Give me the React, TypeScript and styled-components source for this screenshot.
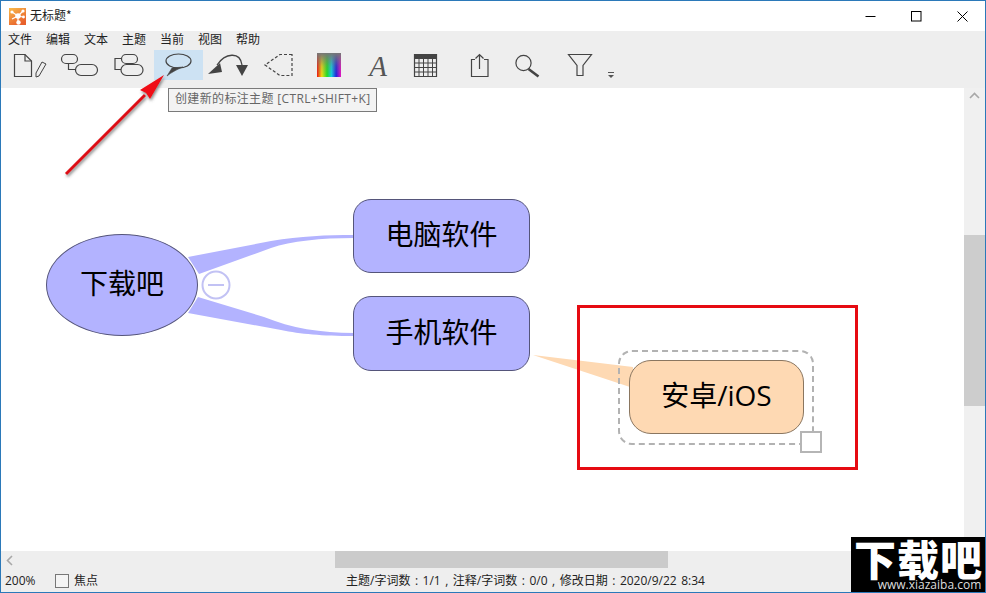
import React from "react";
import styled, { createGlobalStyle } from "styled-components";

const Global = createGlobalStyle`
  html, body { margin: 0; padding: 0; background: #fff; }
  body { font-family: "Noto Sans CJK SC", "Noto Sans", sans-serif; overflow: hidden; }
`;

const Frame = styled.div`
  position: relative;
  width: 986px;
  height: 593px;
  box-sizing: border-box;
  border: 1px solid #2b79b9;
  display: flex;
  flex-direction: column;
  overflow: hidden;
  background: #fff;
`;
const TitleBar = styled.div`
  height: 30px;
  display: flex;
  align-items: center;
  padding-left: 8px;
  flex: none;
`;
const TitleText = styled.span`
  font-size: 12px;
  line-height: 16px;
  color: #222;
  margin-left: 4px;
  margin-bottom: 3px;
`;
const WinControls = styled.div`
  margin-left: auto;
  display: flex;
`;
const WinButton = styled.div`
  width: 46px;
  height: 30px;
  display: flex;
  align-items: center;
  justify-content: center;
`;
const MenuBar = styled.div`
  height: 19px;
  box-sizing: border-box;
  flex: none;
  background: #eeeeee;
  display: flex;
  align-items: center;
  gap: 14px;
  padding: 0 0 3px 7px;
`;
const MenuItem = styled.span`
  font-size: 12px;
  line-height: 16px;
  color: #222;
`;
const Toolbar = styled.div`
  height: 38px;
  flex: none;
  background: #eeeeee;
  display: flex;
  align-items: flex-start;
  padding-left: 4px;
`;
const ToolButton = styled.div<{ $w: number; $gap?: number; $active?: boolean }>`
  width: ${(p) => p.$w}px;
  height: 30px;
  margin-left: ${(p) => p.$gap ?? 0}px;
  flex: none;
  background: ${(p) => (p.$active ? "#cde2f3" : "transparent")};
  svg { display: block; }
`;
const Main = styled.div`
  flex: 1;
  display: flex;
  min-height: 0;
`;
const Canvas = styled.div`
  position: relative;
  flex: 1;
  background: #fff;
`;
const VScroll = styled.div`
  width: 21px;
  flex: none;
  background: #f0f0f0;
  display: flex;
  flex-direction: column;
  align-items: center;
`;
const ScrollArrowBox = styled.div`
  height: 147px;
  width: 100%;
  display: flex;
  justify-content: center;
  padding-top: 4px;
  box-sizing: border-box;
`;
const VThumb = styled.div`
  width: 100%;
  height: 171px;
  background: #cdcdcd;
`;
const HScroll = styled.div`
  height: 19px;
  flex: none;
  background: #eeeeee;
  display: flex;
  align-items: flex-start;
  padding-left: 5px;
  svg { margin-top: 4px; }
`;
const HThumb = styled.div`
  width: 333px;
  height: 17px;
  margin-left: 322px;
  background: #cbcbcb;
`;
const StatusBar = styled.div`
  height: 22px;
  box-sizing: border-box;
  flex: none;
  background: #eeeeee;
  display: flex;
  align-items: center;
  font-size: 12px;
  line-height: 16px;
  color: #222;
  padding: 0 0 1px 4px;
  font-family: "Open Sans", "Noto Sans CJK SC", sans-serif;
`;
const Zoom = styled.span`
  width: 50px;
  flex: none;
`;
const Check = styled.span`
  width: 12px;
  height: 12px;
  border: 1px solid #777;
  background: #f4f4f4;
  flex: none;
  margin-right: 5px;
`;
const FocusLabel = styled.span`
  width: 272px;
  flex: none;
`;
const Stats = styled.span`
  white-space: pre;
  word-spacing: 1.4px;
`;

const Tip = styled.div`
  position: absolute;
  left: 167px;
  top: 0;
  width: 209px;
  height: 24px;
  box-sizing: border-box;
  border: 1px solid #7a7a7a;
  background: #f3f3f3;
  color: #666;
  font-size: 12px;
  line-height: 20px;
  letter-spacing: 0.35px;
  padding-left: 6px;
  white-space: nowrap;
  z-index: 3;
  font-family: "Open Sans", "Noto Sans CJK SC", sans-serif;
`;
const Links = styled.svg`
  position: absolute;
  left: 0;
  top: 0;
`;
const Node = styled.div<{ $x: number; $y: number; $w: number; $h: number; $r: string; $bg: string; $line: string }>`
  position: absolute;
  left: ${(p) => p.$x}px;
  top: ${(p) => p.$y}px;
  width: ${(p) => p.$w}px;
  height: ${(p) => p.$h}px;
  box-sizing: border-box;
  border-radius: ${(p) => p.$r};
  background: ${(p) => p.$bg};
  border: 1px solid ${(p) => p.$line};
  display: flex;
  align-items: center;
  justify-content: center;
  padding-bottom: 4px;
  font-size: 28px;
  line-height: 38px;
  color: #000;
  white-space: nowrap;
  font-family: "Open Sans", "Noto Sans CJK SC", sans-serif;
`;
const Selection = styled.div`
  position: absolute;
  left: 617px;
  top: 262px;
  width: 196px;
  height: 95px;
  box-sizing: border-box;
  border: 2px dashed #b2b2b2;
  border-radius: 14px;
`;
const Handle = styled.div`
  position: absolute;
  left: 799px;
  top: 343px;
  width: 22px;
  height: 22px;
  box-sizing: border-box;
  border: 2px solid #b5b5b5;
  background: #fff;
`;
const RedBox = styled.div`
  position: absolute;
  left: 576px;
  top: 217px;
  width: 281px;
  height: 165px;
  box-sizing: border-box;
  border: 3px solid #e60b12;
`;
const ArrowOverlay = styled.svg`
  position: absolute;
  left: -1px;
  top: -1px;
  z-index: 4;
  pointer-events: none;
`;
const Watermark = styled.div`
  position: absolute;
  right: -1px;
  bottom: -1px;
  width: 135px;
  height: 56px;
  background: #000;
  color: #fff;
  display: flex;
  flex-direction: column;
  align-items: center;
  z-index: 5;
`;
const MarkTitle = styled.span`
  font-size: 42px;
  line-height: 41px;
  font-weight: 900;
  letter-spacing: 1px;
`;
const MarkUrl = styled.span`
  font-size: 12px;
  line-height: 13px;
  margin-left: 22px;
  font-family: "Open Sans", sans-serif;
  color: #ddd;
  white-space: nowrap;
`;

const S = "#444";
const Ico = ({ w, children }: { w: number; children: React.ReactNode }) => (
  <svg width={w} height={30} viewBox={`0 0 ${w} 30`} fill="none" stroke={S} strokeWidth={1.2}>
    {children}
  </svg>
);

const menus = ["文件", "编辑", "文本", "主题", "当前", "视图", "帮助"];

export default function App() {
  return (
    <>
      <Global />
      <Frame>
        <TitleBar>
          <svg width={17} height={17} viewBox="0 0 17 17">
            <defs>
              <linearGradient id="lg" x1="0" y1="0" x2="0.6" y2="1">
                <stop offset="0" stopColor="#f9bb4a" />
                <stop offset="1" stopColor="#e8602c" />
              </linearGradient>
            </defs>
            <rect width="17" height="17" fill="url(#lg)" />
            <g stroke="#fff" strokeWidth="1.2">
              <path d="M9 8L3 4M9 8L14 3M9 8L14 9M9 8L3 11M9 8V14" />
            </g>
            <g fill="#fff">
              <circle cx="9" cy="8" r="2.8" />
              <circle cx="3" cy="4" r="1.6" />
              <circle cx="14" cy="3" r="1.6" />
              <circle cx="14.5" cy="9" r="1.4" />
              <circle cx="9.5" cy="14.5" r="2.2" />
            </g>
          </svg>
          <TitleText>无标题*</TitleText>
          <WinControls>
            <WinButton>
              <svg width={11} height={11} viewBox="0 0 11 11"><path d="M0.5 5.5H10.5" stroke="#000" /></svg>
            </WinButton>
            <WinButton>
              <svg width={11} height={11} viewBox="0 0 11 11"><rect x="0.5" y="0.5" width="9.5" height="9.5" fill="none" stroke="#000" /></svg>
            </WinButton>
            <WinButton>
              <svg width={11} height={11} viewBox="0 0 11 11"><path d="M0.5 0.5L10.5 10.5M10.5 0.5L0.5 10.5" stroke="#000" /></svg>
            </WinButton>
          </WinControls>
        </TitleBar>
        <MenuBar>
          {menus.map((m) => (
            <MenuItem key={m}>{m}</MenuItem>
          ))}
        </MenuBar>
        <Toolbar>
          <ToolButton $w={50}>
            <Ico w={50}>
              <path d="M9.5 4.5H20L26.5 11V26.5H9.5Z" />
              <path d="M20 4.5V11H26.5" />
              <path d="M37 12L41 14L34 26L31 27L31 23Z" strokeWidth="1" />
            </Ico>
          </ToolButton>
          <ToolButton $w={49}>
            <Ico w={49}>
              <rect x="6.5" y="4.5" width="16" height="9" rx="4.5" />
              <rect x="20.5" y="14.5" width="22" height="11" rx="5.5" />
              <path d="M13.5 13.5V19.5H20.5" />
            </Ico>
          </ToolButton>
          <ToolButton $w={50}>
            <Ico w={50}>
              <rect x="17.5" y="4.5" width="16" height="9" rx="4.5" />
              <rect x="17" y="14.5" width="22" height="11" rx="5.5" />
              <path d="M17.5 8.5H11V19.5H17" />
            </Ico>
          </ToolButton>
          <ToolButton $w={49} $active>
            <Ico w={49}>
              <ellipse cx="24.5" cy="11" rx="12.5" ry="7" />
              <path d="M13 26L18 18L29 17C22 20 18 22 13 26Z" fill="#444" strokeWidth="0.6" />
            </Ico>
          </ToolButton>
          <ToolButton $w={50}>
            <Ico w={50}>
              <path d="M14 15C22 3 37 1 39 15" strokeWidth="1.3" />
              <path d="M5 24L17 13L19 22Z" fill="#444" stroke="none" />
              <path d="M33 15H45L39 26Z" fill="#444" stroke="none" />
            </Ico>
          </ToolButton>
          <ToolButton $w={51}>
            <Ico w={51}>
              <path d="M39 4.5H27L12 15L27 25.5H39Z" strokeDasharray="3 2" />
            </Ico>
          </ToolButton>
          <ToolButton $w={50}>
            <svg width={50} height={30} viewBox="0 0 50 30">
              <defs>
                <linearGradient id="rb" x1="0" x2="1" y1="0" y2="0">
                  <stop offset="0" stopColor="#f01010" />
                  <stop offset="0.2" stopColor="#f0e010" />
                  <stop offset="0.42" stopColor="#20e020" />
                  <stop offset="0.6" stopColor="#10d0e0" />
                  <stop offset="0.8" stopColor="#2020e0" />
                  <stop offset="1" stopColor="#f010c0" />
                </linearGradient>
                <linearGradient id="gr" x1="0" x2="0" y1="0" y2="1">
                  <stop offset="0" stopColor="#777" stopOpacity="1" />
                  <stop offset="0.55" stopColor="#777" stopOpacity="0.25" />
                  <stop offset="1" stopColor="#777" stopOpacity="0" />
                </linearGradient>
              </defs>
              <rect x="13" y="3" width="24" height="24" fill="url(#rb)" />
              <rect x="13" y="3" width="24" height="24" fill="url(#gr)" />
            </svg>
          </ToolButton>
          <ToolButton $w={48}>
            <svg width={48} height={38} viewBox="0 0 48 38">
              <text x="24" y="26" textAnchor="middle" fontFamily="'Liberation Serif', serif" fontStyle="italic" fontSize="29" fill="#555">A</text>
            </svg>
          </ToolButton>
          <ToolButton $w={47}>
            <Ico w={47}>
              <rect x="12" y="4" width="23" height="5" fill="#444" stroke="none" />
              <path d="M12.5 4.5H34.5V26.5H12.5Z" />
              <path d="M17 9V26.5M21.5 9V26.5M26 9V26.5M30.5 9V26.5M12.5 13H34.5M12.5 17.5H34.5M12.5 22H34.5" strokeWidth="1" />
            </Ico>
          </ToolButton>
          <ToolButton $w={60}>
            <Ico w={60}>
              <path d="M26 9.5H22.5V26.5H39V9.5H35" />
              <path d="M30.5 19V4.5M26.5 8.5L30.5 4.5L34.5 8.5" />
            </Ico>
          </ToolButton>
          <ToolButton $w={36}>
            <Ico w={36}>
              <circle cx="14.5" cy="13" r="7.6" />
              <path d="M19.5 19L29.5 26.5" strokeWidth="2.6" />
            </Ico>
          </ToolButton>
          <ToolButton $w={50} $gap={10}>
            <Ico w={50}>
              <path d="M13.5 4.5H36.5L28 15.5V25.5H22V15.5Z" />
            </Ico>
          </ToolButton>
          <ToolButton $w={12}>
            <svg width={12} height={30} viewBox="0 0 12 30">
              <path d="M3 22.5H9" stroke="#555" />
              <path d="M3 25H9L6 28Z" fill="#555" />
            </svg>
          </ToolButton>
        </Toolbar>
        <Main>
          <Canvas>
            <Links width={963} height={463}>
              <path d="M187 169L270 153C300 148 325 147 353 147V150C320 150 290 153 270 160L198 186Z" fill="#b3b3ff" />
              <path d="M197 209L263 229C290 240 320 245 353 245V248C320 248 300 246 280 242L187 225Z" fill="#b3b3ff" />
              <path d="M532 267L632 279V300Z" fill="#fed9b3" />
              <circle cx="215" cy="197" r="13.5" fill="#fff" stroke="#c2c2f4" strokeWidth="2" />
              <path d="M207 197H223" stroke="#c2c2f4" strokeWidth="2" />
            </Links>
            <Node $x={45} $y={146} $w={152} $h={102} $r="50%" $bg="#b3b3ff" $line="#55557a">下载吧</Node>
            <Node $x={352} $y={111} $w={177} $h={74} $r="18px" $bg="#b3b3ff" $line="#55557a">电脑软件</Node>
            <Node $x={352} $y={208} $w={177} $h={75} $r="18px" $bg="#b3b3ff" $line="#55557a">手机软件</Node>
            <Selection />
            <Node $x={628} $y={272} $w={175} $h={74} $r="22px" $bg="#fed9b3" $line="#8a7660">安卓/iOS</Node>
            <Handle />
            <RedBox />
            <Tip>创建新的标注主题 [CTRL+SHIFT+K]</Tip>
          </Canvas>
          <VScroll>
            <ScrollArrowBox>
              <svg width={11} height={7} viewBox="0 0 11 7"><path d="M1 6L5.5 1.5L10 6" fill="none" stroke="#a8a8a8" strokeWidth="1.6" /></svg>
            </ScrollArrowBox>
            <VThumb />
          </VScroll>
        </Main>
        <HScroll>
          <svg width={7} height={11} viewBox="0 0 7 11"><path d="M6 1L1.5 5.5L6 10" fill="none" stroke="#a8a8a8" strokeWidth="1.6" /></svg>
          <HThumb />
        </HScroll>
        <StatusBar>
          <Zoom>200%</Zoom>
          <Check />
          <FocusLabel>焦点</FocusLabel>
          <Stats>主题/字词数 : 1/1 , 注释/字词数 : 0/0 , 修改日期 : 2020/9/22 8:34</Stats>
        </StatusBar>
        <ArrowOverlay width={986} height={593}>
          <defs>
            <filter id="sh" x="-20%" y="-20%" width="140%" height="140%">
              <feDropShadow dx="1" dy="2" stdDeviation="1.5" floodColor="#555" floodOpacity="0.7" />
            </filter>
          </defs>
          <g filter="url(#sh)">
            <path d="M66 174L145 95" stroke="#dd0f14" strokeWidth="3" />
            <path d="M164 75L140 90L146 93L150 99Z" fill="#f00c14" />
          </g>
        </ArrowOverlay>
        <Watermark>
          <MarkTitle>下载吧</MarkTitle>
          <MarkUrl>www.xiazaiba.com</MarkUrl>
        </Watermark>
      </Frame>
    </>
  );
}
